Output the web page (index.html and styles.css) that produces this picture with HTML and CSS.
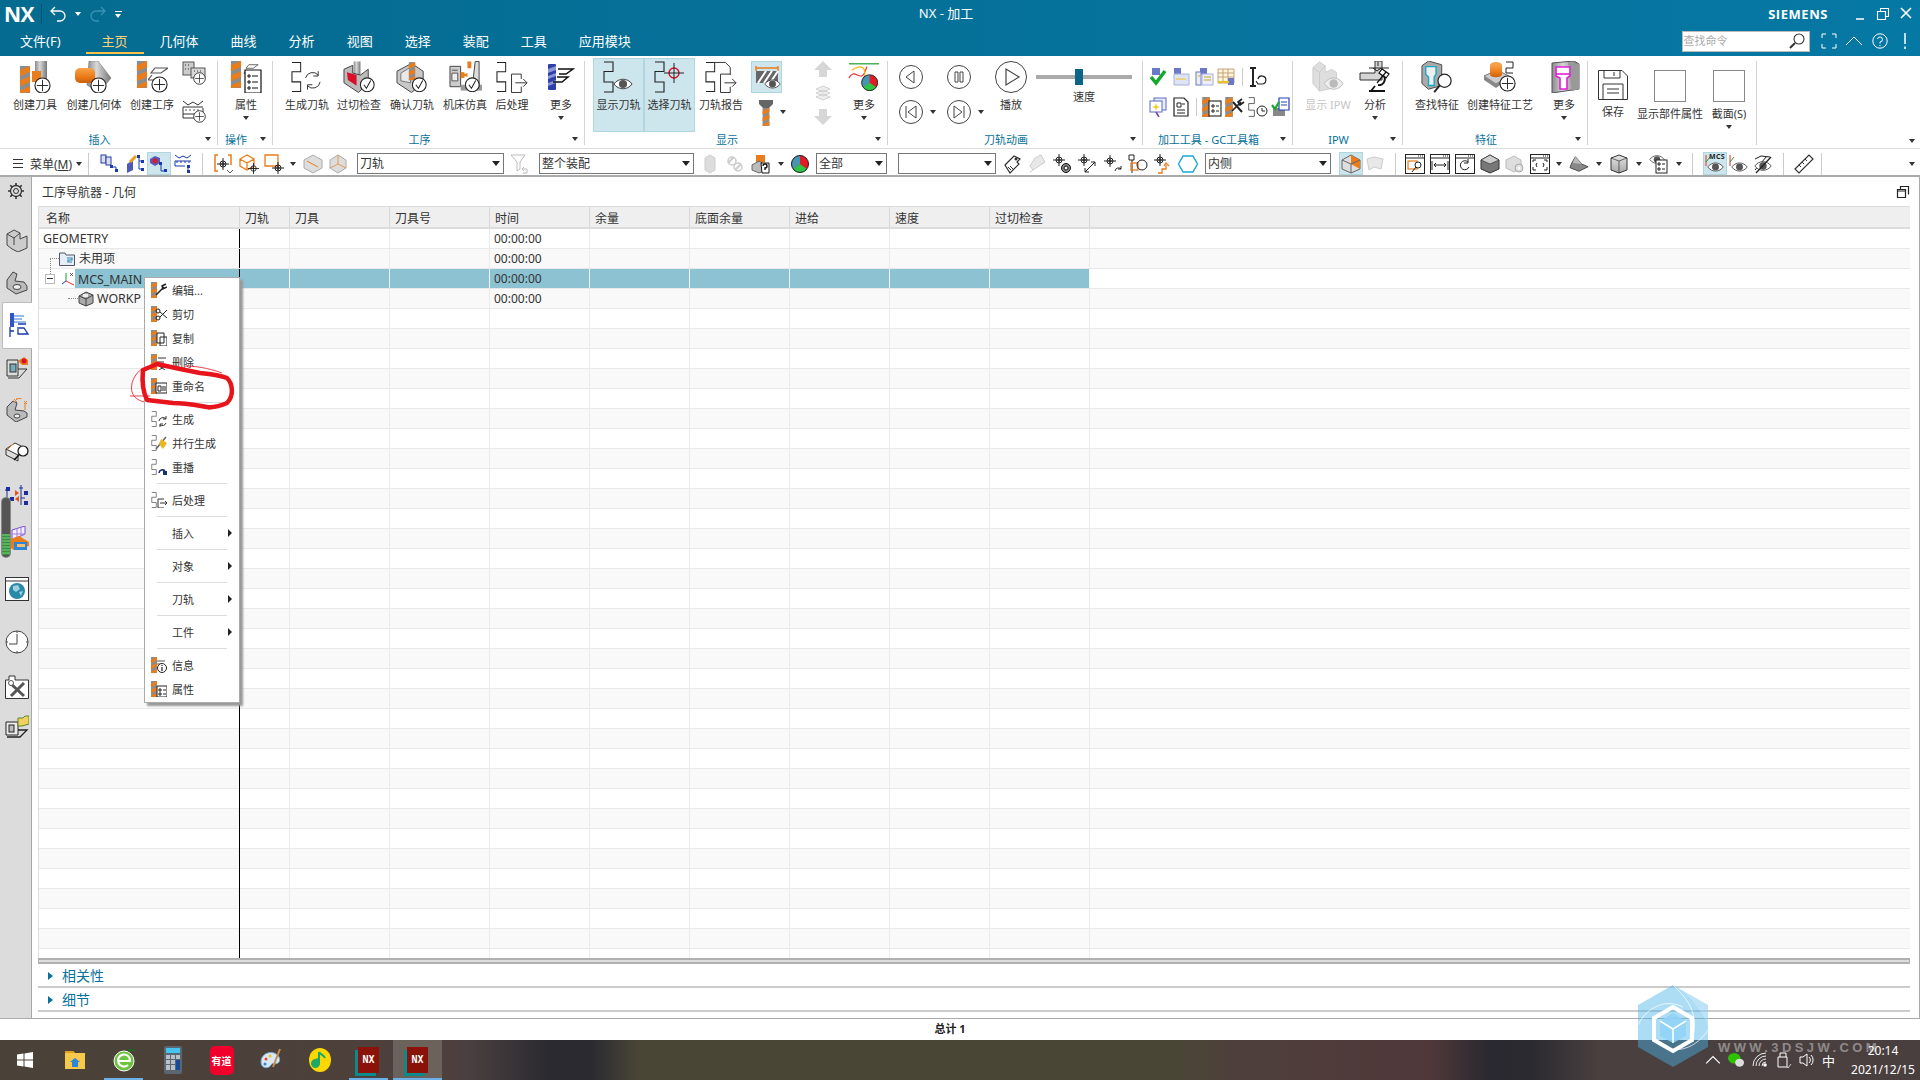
FILE: index.html
```html
<!DOCTYPE html>
<html lang="zh-CN">
<head>
<meta charset="utf-8">
<title>NX - 加工</title>
<link rel="stylesheet" href="styles.css">
</head>
<body>
<svg class="defs" xmlns="http://www.w3.org/2000/svg">
<defs>
<linearGradient id="gOr" x1="0" y1="0" x2="0" y2="1"><stop offset="0" stop-color="#f8a24a"/><stop offset=".6" stop-color="#ea7a16"/><stop offset="1" stop-color="#c85f0c"/></linearGradient>
<linearGradient id="gGr" x1="0" y1="0" x2="1" y2="0"><stop offset="0" stop-color="#8a8a8a"/><stop offset=".4" stop-color="#d8d8d8"/><stop offset="1" stop-color="#777"/></linearGradient>
<linearGradient id="gLg" x1="0" y1="0" x2="0" y2="1"><stop offset="0" stop-color="#e6e6e6"/><stop offset="1" stop-color="#a8a8a8"/></linearGradient>
</defs>
<symbol id="bit" viewBox="0 0 12 32"><rect width="12" height="32" fill="#8c8c8c"/><path d="M0 5L12 0V7L0 12ZM0 17L12 12V19L0 24ZM0 29L12 24V31L0 32Z" fill="#e97c1b"/></symbol>
<symbol id="plus" viewBox="0 0 18 18"><circle cx="9" cy="9" r="8" fill="#fff" stroke="#222" stroke-width="1.2"/><path d="M9 3V15M3 9H15" stroke="#222" fill="none"/></symbol>
<symbol id="chk" viewBox="0 0 18 18"><circle cx="9" cy="9" r="8" fill="#fff" stroke="#222" stroke-width="1.2"/><path d="M5 9L8 13L13 4" stroke="#222" fill="none" stroke-width="1.2"/></symbol>
<symbol id="snake" viewBox="0 0 11 32"><path d="M1 1H10V10.500H1V21H10V31H1" fill="none" stroke="#222" stroke-width="1.100"/></symbol>
<symbol id="eye" viewBox="0 0 22 14"><path d="M1 7C6 0 16 0 21 7C16 14 6 14 1 7Z" fill="#fff" stroke="#333"/><circle cx="11" cy="7" r="4.500" fill="#555"/></symbol>
<symbol id="slant" viewBox="0 0 20 14"><path d="M7 1H20L13 6H3ZM4 8L0 13H12" fill="none" stroke="#555" stroke-width="1.200"/></symbol>

<symbol id="b-ctool" viewBox="0 0 33 32"><use href="#bit" x="0" y="5" width="12" height="27"/><rect x="16" y="0" width="12" height="18" fill="url(#gGr)"/><rect x="13" y="10" width="9" height="11" fill="#e97c1b"/><use href="#plus" x="15" y="16" width="17" height="17"/></symbol>
<symbol id="b-cgeom" viewBox="0 0 38 32"><path d="M14 0H23L36 17L24 32L12 24Z" fill="url(#gGr)" stroke="#666" stroke-width=".5"/><rect x="0" y="7" width="20" height="15" rx="5" fill="url(#gOr)"/><use href="#plus" x="15" y="16" width="17" height="17"/></symbol>
<symbol id="b-cop" viewBox="0 0 33 32"><use href="#bit" x="0" y="0" width="12" height="27"/><use href="#slant" x="12" y="6" width="20" height="14"/><use href="#plus" x="15" y="15" width="17" height="17"/></symbol>
<symbol id="s-c1" viewBox="0 0 24 24"><rect x="1" y="1" width="11" height="13" fill="#ccc" stroke="#555"/><rect x="9" y="7" width="14" height="10" fill="#d8d8d8" stroke="#555"/><path d="M3 4h1M6 4h1M3 8h1M6 8h1M12 10h1M15 10h1M18 10h1" stroke="#333"/><use href="#plus" x="11" y="11" width="13" height="13"/></symbol>
<symbol id="s-c2" viewBox="0 0 24 24"><path d="M1 2L6 6L11 3L16 6L21 2M1 8H21M1 15H21V9M1 8V19H12" fill="none" stroke="#333"/><path d="M3 11h2M7 11h2M11 11h2M15 11h2" stroke="#555"/><use href="#plus" x="11" y="11" width="13" height="13"/></symbol>
<symbol id="b-attr" viewBox="0 0 33 32"><use href="#bit" x="0" y="0" width="12" height="27"/><use href="#slant" x="11" y="3" width="20" height="10"/><path d="M15 9H31V32H15Z" fill="#fff" stroke="#111" stroke-width="1.200"/><path d="M18 14h2v2h-2zM18 20h2v2h-2zM18 26h2v2h-2z" fill="none" stroke="#111"/><path d="M22 15h6M22 21h6M22 27h6" stroke="#111"/></symbol>
<symbol id="b-gen" viewBox="0 0 34 32"><use href="#snake" x="0" y="0" width="11" height="32"/><path d="M15 17A7.500 7.500 0 0 1 28 14M30 21A7.500 7.500 0 0 1 17 25" fill="none" stroke="#333"/><path d="M28 10V15H23M17 29V24H22" fill="none" stroke="#333"/></symbol>
<symbol id="b-gouge" viewBox="0 0 34 32"><rect x="11" y="0" width="7" height="18" fill="url(#gGr)"/><path d="M1 8L10 4V12L18 14L26 8V22L16 32L1 22Z" fill="#bbb" stroke="#444"/><path d="M4 11L14 14V25L5 19Z" fill="#d8102a"/><use href="#chk" x="17" y="16" width="16" height="16"/></symbol>
<symbol id="b-conf" viewBox="0 0 34 32"><path d="M1 10L16 2L28 10V22L16 32L1 22Z" fill="#c8c8c8" stroke="#444"/><path d="M5 12L15 6V22L5 20Z" fill="#e9e9e9" stroke="#777"/><use href="#bit" x="13" y="0" width="7" height="20"/><use href="#chk" x="16" y="16" width="16" height="16"/></symbol>
<symbol id="b-mach" viewBox="0 0 34 32"><path d="M1 5H12V26H1Z" fill="#ccc" stroke="#444"/><path d="M3 9h6M3 12h6v8H3z" fill="#eee" stroke="#555"/><rect x="12" y="24" width="22" height="6" fill="#999"/><path d="M27 0H31V26H24Z" fill="#ddd" stroke="#444"/><rect x="19" y="0" width="4" height="7" fill="#e97c1b"/><path d="M13 14L19 12V16Z" fill="#e97c1b"/><rect x="12" y="11" width="4" height="6" fill="#e97c1b"/><use href="#chk" x="16" y="16" width="16" height="16"/></symbol>
<symbol id="b-post" viewBox="0 0 34 32"><use href="#snake" x="0" y="0" width="11" height="32"/><path d="M26 13H16V32H26M20 22H32M28 18L32 22L28 26M26 13V18M26 26V32" fill="none" stroke="#333"/></symbol>
<symbol id="b-more1" viewBox="0 0 32 32"><rect x="3" y="3" width="8" height="26" rx="1" fill="#2f3fa8"/><path d="M3 8L11 5V9L3 12ZM3 15L11 12V15L3 18ZM3 22L11 19V22L3 25Z" fill="#8a96d8"/><path d="M13 8H28L21 13H14M12 16H23L17 21H8" fill="none" stroke="#111" stroke-width="1.500"/></symbol>
<symbol id="b-show" viewBox="0 0 32 32"><use href="#snake" x="0" y="0" width="11" height="32"/><use href="#eye" x="10" y="16" width="20" height="14"/></symbol>
<symbol id="b-sel" viewBox="0 0 32 32"><use href="#snake" x="0" y="0" width="11" height="32"/><circle cx="20" cy="12" r="5" fill="none" stroke="#d8102a" stroke-width="1.400"/><path d="M20 2V22M10 12H30" stroke="#222"/></symbol>
<symbol id="b-rep" viewBox="0 0 34 32"><use href="#snake" x="0" y="0" width="11" height="32"/><path d="M8 1H21L26 6V14" fill="none" stroke="#333"/><path d="M26 13H16V32H26M20 22H32M28 18L32 22L28 26M26 26V32" fill="none" stroke="#333"/></symbol>
<symbol id="b-thick" viewBox="0 0 28 28"><path d="M3 3V8M25 3V8M3 5H25" stroke="#e97c1b" stroke-width="1.500" fill="none"/><rect x="3" y="8" width="22" height="12" fill="#666"/><path d="M5 20L13 8M11 20L19 8M17 20L25 8" stroke="#fff" stroke-width="2"/><use href="#eye" x="11" y="15" width="17" height="12"/></symbol>
<symbol id="s-tool" viewBox="0 0 14 26"><path d="M0 0H14V4L10 8H4L0 4Z" fill="#666"/><use href="#bit" x="3" y="8" width="8" height="18"/></symbol>
<symbol id="up" viewBox="0 0 18 16"><path d="M9 0L18 9H13V16H5V9H0Z" fill="#d6d6d6"/></symbol>
<symbol id="down" viewBox="0 0 18 16"><path d="M9 16L18 7H13V0H5V7H0Z" fill="#d6d6d6"/></symbol>
<symbol id="layers" viewBox="0 0 16 16"><path d="M1 4L8 1L15 4L8 7ZM1 8L8 5L15 8L8 11ZM1 12L8 9L15 12L8 15Z" fill="#eee" stroke="#c2c2c2" stroke-width=".7"/></symbol>
<symbol id="pie" viewBox="0 0 18 18"><circle cx="9" cy="9" r="8.500" fill="#e31b23"/><path d="M9 9V.5A8.500 8.500 0 0 0 2 14Z" fill="#4596b5"/><path d="M9 9L2 14A8.500 8.500 0 0 0 16 14Z" fill="#2cc544"/><circle cx="9" cy="9" r="8.500" fill="none" stroke="#222"/></symbol>
<symbol id="b-more2" viewBox="0 0 34 34"><path d="M1 3H33" stroke="#0a9a20" stroke-width="1.200"/><path d="M1 18C8 5 14 28 20 6" fill="none" stroke="#e82a30" stroke-width="1.200"/><path d="M4 10C12 3 24 5 14 24" fill="none" stroke="#f2b400" stroke-width="1.200"/><use href="#pie" x="14" y="14" width="18" height="18"/></symbol>
<symbol id="circ-l" viewBox="0 0 24 24"><circle cx="12" cy="12" r="11.500" fill="#fff" stroke="#444"/><path d="M15 6V18L7 12Z" fill="none" stroke="#444"/></symbol>
<symbol id="circ-p" viewBox="0 0 24 24"><circle cx="12" cy="12" r="11.500" fill="#fff" stroke="#444"/><path d="M8 7h3v10H8zM13 7h3v10h-3z" fill="none" stroke="#444"/></symbol>
<symbol id="circ-s" viewBox="0 0 24 24"><circle cx="12" cy="12" r="11.500" fill="#fff" stroke="#444"/><path d="M7 6V18M17 6V18L9 12Z" fill="none" stroke="#444"/></symbol>
<symbol id="circ-e" viewBox="0 0 24 24"><circle cx="12" cy="12" r="11.500" fill="#fff" stroke="#444"/><path d="M17 6V18M7 6V18L15 12Z" fill="none" stroke="#444"/></symbol>
<symbol id="circ-g" viewBox="0 0 32 32"><circle cx="16" cy="16" r="15.500" fill="#fff" stroke="#444"/><path d="M11 8V24L24 16Z" fill="none" stroke="#444" stroke-width="1.200"/></symbol>
<symbol id="g-a" viewBox="0 0 20 20"><rect x="4" y="1" width="8" height="7" fill="#6a78c8"/><path d="M3 10L8 16L17 4" fill="none" stroke="#12a82a" stroke-width="3.500"/></symbol>
<symbol id="g-b" viewBox="0 0 20 20"><rect x="3" y="1" width="7" height="7" fill="#6a78c8"/><path d="M3 7H18V18H3Z" fill="#dfe4f4" stroke="#a8b0d8"/><path d="M5 12h10" stroke="#f0c020"/></symbol>
<symbol id="g-c" viewBox="0 0 20 20"><rect x="6" y="1" width="7" height="7" fill="#6a78c8"/><rect x="2" y="5" width="5" height="13" fill="#eee" stroke="#6a78c8"/><rect x="8" y="7" width="11" height="11" fill="#eef" stroke="#a8b0d8"/><path d="M10 10h7M10 13h7M4 9h2" stroke="#c2a820"/></symbol>
<symbol id="g-d" viewBox="0 0 20 20"><path d="M1 2H17V16H1ZM1 6H17M1 10H17M6 2V16M11 2V16" fill="#fff7d8" stroke="#c2a080"/><rect x="11" y="11" width="6" height="7" fill="#6a78c8"/><path d="M1 15H12" stroke="#e8c020" stroke-width="2"/></symbol>
<symbol id="g-e" viewBox="0 0 20 20"><path d="M2 1H8M2 19H8M5 1V19" stroke="#222" stroke-width="2"/><path d="M10 12A4 4 0 1 1 14 17H10L8 14" fill="none" stroke="#222" stroke-width="1.200"/></symbol>
<symbol id="g-f" viewBox="0 0 20 20"><rect x="6" y="1" width="12" height="12" fill="#e8ecff" stroke="#5a6ac0"/><rect x="2" y="4" width="12" height="11" fill="#fff" stroke="#5a6ac0"/><path d="M8 6L9 9L12 10L9 11L8 14L7 11L4 10L7 9Z" fill="#f0d020"/><path d="M8 15L11 20" stroke="#7b3ac0" stroke-width="1.500"/></symbol>
<symbol id="g-g" viewBox="0 0 20 20"><path d="M3 1H13L17 5V19H3Z" fill="#fff" stroke="#222" stroke-width="1.200"/><path d="M6 6H10V10H6ZM6 13H14M6 16H14M11 7H14" fill="none" stroke="#222"/></symbol>
<symbol id="g-h" viewBox="0 0 20 20"><use href="#bit" x="0" y="0" width="8" height="20"/><rect x="7" y="4" width="12" height="15" fill="#fff" stroke="#222" stroke-width="1.100"/><path d="M10 8h2v2h-2zM10 13h2v2h-2zM14 9h3M14 14h3" fill="none" stroke="#222"/></symbol>
<symbol id="g-i" viewBox="0 0 20 20"><use href="#bit" x="0" y="0" width="8" height="20"/><path d="M7 14L16 5M17 2L13 5L15 8L19 5" fill="none" stroke="#222" stroke-width="1.600"/><path d="M8 5L17 15" stroke="#222" stroke-width="2"/></symbol>
<symbol id="g-j" viewBox="0 0 20 20"><use href="#snake" x="0" y="0" width="7" height="20"/><circle cx="14" cy="14" r="5" fill="#fff" stroke="#222"/><path d="M14 11V14H17" fill="none" stroke="#222"/></symbol>
<symbol id="g-k" viewBox="0 0 20 20"><rect x="2" y="11" width="12" height="8" fill="#888"/><path d="M8 1H18V13H8Z" fill="#fff" stroke="#2440b8" stroke-width="1.200"/><path d="M10 5h6M10 8h6" stroke="#2440b8"/><path d="M1 8L4 12L8 5" stroke="#1ca830" stroke-width="2.200" fill="none"/></symbol>
<symbol id="b-ipw" viewBox="0 0 34 34"><path d="M1 7L8 1L14 5V12L21 9L26 12V28L8 32L1 24Z" fill="#dedede" stroke="#ccc"/><path d="M8 32V12L1 7M8 12L14 5" fill="none" stroke="#c8c8c8"/><path d="M13 24C18 16 28 16 33 24C28 32 18 32 13 24Z" fill="#eee" stroke="#bbb"/><circle cx="23" cy="24" r="4.500" fill="#bbb"/></symbol>
<symbol id="b-ana" viewBox="0 0 32 32"><path d="M1 12H16V0H23V19H1Z" fill="#d5d5d5" stroke="#333"/><path d="M14 7L18 10L22 7M19 1V5M10 7H30M10 0" fill="none" stroke="#222"/><path d="M27 11L18 22M23 8L30 13L27 17L20 12Z" fill="#fff" stroke="#111" stroke-width="1.200"/><path d="M10 30H26M12 30L16 25M19 24A6 6 0 0 0 25 15" fill="none" stroke="#111" stroke-width="1.800"/></symbol>
<symbol id="b-find" viewBox="0 0 34 34"><path d="M1 5L8 0L22 4V26L8 30L1 24Z" fill="#aaa" stroke="#444"/><path d="M5 6H16V14L14 17V26H8V17L5 14Z" fill="#eee" stroke="#18a8c8" stroke-width="1.500"/><circle cx="25" cy="21" r="7" fill="#fff" stroke="#222" stroke-width="1.300"/><path d="M20 26L14 33" stroke="#222" stroke-width="2"/></symbol>
<symbol id="b-feat" viewBox="0 0 34 32"><path d="M1 15L14 9L26 15L13 23Z" fill="#ccc" stroke="#777"/><path d="M1 15V19L13 27V23ZM26 15V18L13 27V23Z" fill="#888"/><ellipse cx="13" cy="4" rx="6" ry="3" fill="#f4a24a"/><path d="M7 4V14C9 17 17 17 19 14V4Z" fill="url(#gOr)"/><path d="M23 1H30V7H23V12H30" fill="none" stroke="#222"/><use href="#plus" x="16" y="14" width="17" height="17"/></symbol>
<symbol id="b-moref" viewBox="0 0 32 32"><path d="M4 2L26 0L31 3V28L4 32Z" fill="url(#gGr)" stroke="#555"/><path d="M20 1L31 3V28L24 30Z" fill="#999"/><path d="M8 6H22V15L19 17V28H12V17L8 15Z" fill="#fff" stroke="#e020d8" stroke-width="1.600"/><path d="M8 13H22" stroke="#e020d8" stroke-width="1.600"/></symbol>
<symbol id="b-save" viewBox="0 0 30 30"><path d="M.5.500H24L29.500 6V29.500H.5Z" fill="#fff" stroke="#333"/><path d="M6 .5V8H22V.5M16 2V6M5 14H25V29M5 29V14M9 19H21M9 23H21" fill="none" stroke="#333"/></symbol>

<symbol id="t-a" viewBox="0 0 20 20"><rect x="1" y="1" width="5" height="8" fill="#dde" stroke="#2240a0"/><rect x="6" y="3" width="5" height="8" fill="#dde" stroke="#2240a0"/><path d="M12 13H16V17" fill="none" stroke="#1a3ab0"/><rect x="10" y="11" width="3" height="3" fill="#1a3ab0"/><rect x="15" y="15" width="3" height="3" fill="#1a3ab0"/></symbol>
<symbol id="t-b" viewBox="0 0 20 20"><path d="M2 10L8 6V16L2 19Z" fill="#5058b8"/><path d="M5 8L11 2" stroke="#e8a020" stroke-width="3"/><path d="M14 2V15M14 7H17M14 15H17" fill="none" stroke="#1a3ab0"/><rect x="12" y="1" width="3" height="3" fill="#1a3ab0"/><rect x="16" y="6" width="3" height="3" fill="#1a3ab0"/><rect x="16" y="14" width="3" height="3" fill="#1a3ab0"/></symbol>
<symbol id="t-c" viewBox="0 0 20 20"><path d="M1 5L6 2L11 4V9L6 12L1 9Z" fill="#5a58b8"/><circle cx="6" cy="7" r="2.500" fill="#d81b2a"/><path d="M12 9V17H16" fill="none" stroke="#1a3ab0"/><rect x="10" y="8" width="3" height="3" fill="#1a3ab0"/><rect x="15" y="15" width="3" height="3" fill="#1a3ab0"/></symbol>
<symbol id="t-d" viewBox="0 0 20 20"><path d="M1 1L5 4L9 2L13 4L17 1M1 7H17M1 12H11M1 7V12M3 7V9M7 7V9M11 7V9M15 7V9" fill="none" stroke="#1a3ab0"/><path d="M14 12V18" stroke="#1a3ab0"/><rect x="13" y="11" width="3" height="3" fill="#1a3ab0"/><rect x="13" y="16" width="3" height="3" fill="#1a3ab0"/></symbol>
<symbol id="cross" viewBox="0 0 12 12"><circle cx="6" cy="6" r="3" fill="none" stroke="#222"/><path d="M6 0V12M0 6H12M4 6H8M6 4V8" stroke="#222"/></symbol>
<symbol id="t-e" viewBox="0 0 20 20"><path d="M4 1H1V17H4M14 1H17V11" fill="none" stroke="#e97c1b" stroke-width="1.500"/><use href="#cross" x="3" y="4" width="12" height="12"/><path d="M13 16L16 19L19 16" fill="none" stroke="#555"/></symbol>
<symbol id="t-f" viewBox="0 0 20 20"><path d="M1 5L8 1L15 5V12L8 16L1 12ZM1 5L8 9L15 5M8 9V16" fill="none" stroke="#e97c1b" stroke-width="1.300"/><use href="#cross" x="9" y="9" width="11" height="11"/></symbol>
<symbol id="t-g" viewBox="0 0 20 20"><path d="M1 1H14V12H1Z" fill="none" stroke="#e97c1b" stroke-width="1.300"/><use href="#cross" x="8" y="8" width="12" height="12"/></symbol>
<symbol id="t-h" viewBox="0 0 20 20"><path d="M1 6L10 1L19 6V14L10 19L1 14Z" fill="#ddd" stroke="#aaa"/><path d="M4 7L15 13" stroke="#e97c1b"/></symbol>
<symbol id="t-i" viewBox="0 0 20 20"><path d="M2 6L10 1L18 6V14L10 19L2 14Z" fill="#ddd" stroke="#aaa"/><path d="M10 1V10L18 14M10 10L2 14" fill="none" stroke="#e97c1b" stroke-opacity=".7"/></symbol>
<symbol id="t-j" viewBox="0 0 20 20"><path d="M1 1H15L10 8V15L7 17V8Z" fill="#fff" stroke="#bbb"/><path d="M12 15H17V19H13M14 13L12 15L14 17" fill="none" stroke="#bbb"/></symbol>
<symbol id="t-k" viewBox="0 0 20 20"><path d="M5 4L10 1L15 4V16L10 19L5 16Z" fill="#ddd" stroke="#ccc"/></symbol>
<symbol id="t-l" viewBox="0 0 20 20"><path d="M3 9L9 3M10 16L16 10" stroke="#ccc" stroke-width="2"/><circle cx="7" cy="7" r="4" fill="none" stroke="#ccc" stroke-width="1.500"/><circle cx="13" cy="13" r="4" fill="none" stroke="#ccc" stroke-width="1.500"/></symbol>
<symbol id="t-m" viewBox="0 0 20 20"><rect x="5" y="1" width="9" height="7" fill="#e97c1b"/><path d="M1 11L8 7L15 11V16L8 19L1 16Z" fill="#bbb" stroke="#666"/><path d="M10 9H18V19H11Z" fill="#fff" stroke="#111"/><path d="M12 12A2 2 0 1 1 14 14V16" fill="none" stroke="#111" stroke-width="1.400"/></symbol>
<symbol id="t-n" viewBox="0 0 20 20"><path d="M3 11L12 2L18 5L15 8L17 10L8 19Z" fill="#fff" stroke="#333" stroke-width="1.200"/><circle cx="14" cy="5" r="1.500" fill="#333"/><path d="M8 12L11 15M6 13L9 16" stroke="#333"/></symbol>
<symbol id="t-o" viewBox="0 0 20 20"><path d="M8 4L14 1L18 8L6 16L3 12Z" fill="#e8e8e8" stroke="#ccc"/><path d="M6 16L3 18" stroke="#ccc"/></symbol>
<symbol id="t-p" viewBox="0 0 20 20"><use href="#cross" x="1" y="0" width="12" height="12"/><circle cx="14" cy="14" r="4.500" fill="#888" stroke="#111"/><circle cx="14" cy="14" r="2" fill="#fff" stroke="#111"/></symbol>
<symbol id="t-q" viewBox="0 0 20 20"><use href="#cross" x="1" y="0" width="12" height="12"/><path d="M8 18L18 8M8 14V18H12M14 8H18V12" fill="none" stroke="#222"/></symbol>
<symbol id="t-r" viewBox="0 0 20 20"><use href="#cross" x="1" y="1" width="12" height="12"/><path d="M12 17A3.500 3.500 0 0 1 18 15M18 12V15H15" fill="none" stroke="#222"/></symbol>
<symbol id="t-s" viewBox="0 0 20 20"><path d="M1 1H6V6H1ZM4 6V19" fill="#fff" stroke="#222"/><rect x="3" y="9" width="7" height="7" fill="none" stroke="#e97c1b" stroke-width="1.300"/><circle cx="14" cy="11" r="5" fill="none" stroke="#222"/></symbol>
<symbol id="t-t" viewBox="0 0 20 20"><use href="#cross" x="1" y="0" width="12" height="12"/><path d="M5 19H9V15H13V11M11 12L13 9L16 12" fill="none" stroke="#e97c1b" stroke-width="1.300"/></symbol>
<symbol id="t-hex" viewBox="0 0 20 20"><path d="M5 2H15L19.500 10L15 18H5L.5 10Z" fill="none" stroke="#18a8d8" stroke-width="1.400"/></symbol>
<symbol id="t-u" viewBox="0 0 20 20"><path d="M1 6L10 1L19 6V15L10 19L1 15Z" fill="#ddd" stroke="#666"/><path d="M10 1L19 6V15L10 10Z" fill="#e97c1b"/><path d="M1 6L10 10L19 6M10 10V19" fill="none" stroke="#666"/></symbol>
<symbol id="t-v" viewBox="0 0 20 20"><path d="M2 5L9 3L18 5L16 15L9 13L4 16Z" fill="#e8e8e8" stroke="#ccc"/></symbol>
<symbol id="win" viewBox="0 0 20 20"><rect x=".5" y=".5" width="19" height="19" fill="#fff" stroke="#222"/><path d="M.5 4H19.500M13 2h1M15 2h1M17 2h1" stroke="#222"/></symbol>
<symbol id="t-w" viewBox="0 0 20 20"><use href="#win" width="20" height="20"/><rect x="3" y="7" width="9" height="8" fill="none" stroke="#e97c1b" stroke-width="1.200"/><circle cx="13" cy="11" r="3" fill="#fff" stroke="#222"/><path d="M11 13L7 18" stroke="#222"/></symbol>
<symbol id="t-x" viewBox="0 0 20 20"><use href="#win" width="20" height="20"/><path d="M4 11H16M6 9L4 11L6 13M14 9L16 11L14 13M2 7V16M18 7V16" fill="none" stroke="#222"/></symbol>
<symbol id="t-y" viewBox="0 0 20 20"><use href="#win" width="20" height="20"/><path d="M13 8A4.500 4.500 0 1 0 14 13M13 5V9H9" fill="none" stroke="#222"/></symbol>
<symbol id="t-z" viewBox="0 0 20 20"><path d="M1 6L10 1L19 6V15L10 19L1 15Z" fill="#777" stroke="#333"/><path d="M1 6L10 10L19 6L10 1Z" fill="#ccc" stroke="#333" stroke-width=".7"/></symbol>
<symbol id="t-aa" viewBox="0 0 20 20"><path d="M1 6L9 2L16 6V14L9 18L1 14Z" fill="#ddd" stroke="#bbb"/><circle cx="14" cy="14" r="4" fill="#ddd" stroke="#aaa"/><circle cx="14" cy="14" r="1.500" fill="#fff"/></symbol>
<symbol id="t-ab" viewBox="0 0 20 20"><use href="#win" width="20" height="20"/><path d="M3 8V6H6M14 6H17V8M3 13V16H6M14 16H17V13M7 9L6 11L7 13M13 9L14 11L13 13" fill="none" stroke="#222"/></symbol>
<symbol id="t-ac" viewBox="0 0 22 20"><path d="M7 2L14 10L21 13L11 18L1 14L3 9Z" fill="#888" stroke="#444"/><path d="M7 2L4 9L14 10Z" fill="#bbb"/></symbol>
<symbol id="t-ad" viewBox="0 0 20 20"><path d="M2 4L10 1L18 4V16L10 19L2 16Z" fill="url(#gLg)" stroke="#333"/><path d="M2 4L10 7L18 4M10 7V19" fill="none" stroke="#333" stroke-width=".7"/></symbol>
<symbol id="t-ae" viewBox="0 0 20 20"><use href="#eye" x="0" y="0" width="16" height="11"/><rect x="7" y="6" width="11" height="13" fill="#fff" stroke="#222"/><path d="M9 9h2v2H9zM9 14h2v2H9zM13 10h3M13 15h3" fill="none" stroke="#222"/></symbol>
<symbol id="t-af" viewBox="0 0 20 20"><path d="M1 12V1" stroke="#e82a30"/><path d="M1 8L5 3" stroke="#18a030"/><use href="#eye" x="2" y="7" width="17" height="12"/></symbol>
<symbol id="t-ag" viewBox="0 0 20 20"><path d="M2 16L14 2" stroke="#222"/><path d="M2 5L8 2L17 3" fill="none" stroke="#222"/><use href="#eye" x="1" y="6" width="18" height="12"/><path d="M3 19L18 3" stroke="#222" stroke-width="1.300"/></symbol>
<symbol id="t-ah" viewBox="0 0 20 20"><path d="M1 15L15 1L19 5L5 19Z" fill="#fff" stroke="#333" stroke-width="1.200"/><path d="M5 11L7 13M8 8L10 10M11 5L13 7" stroke="#333"/></symbol>

<symbol id="n-a" viewBox="0 0 24 24"><path d="M2 6L9 2L15 5V11L22 8V20L13 24L7 21L2 17Z" fill="#ccc" stroke="#444"/><path d="M2 6L9 10L15 5M9 10V17" fill="none" stroke="#444"/></symbol>
<symbol id="n-b" viewBox="0 0 24 24"><path d="M2 17V9L8 1L12 3L10 10L19 11L22 15V19L11 23Z" fill="#bbb" stroke="#444"/><ellipse cx="12" cy="16" rx="4" ry="2.500" fill="#eee" stroke="#444"/></symbol>
<symbol id="n-c" viewBox="0 0 24 24"><rect x="4" y="0" width="4" height="14" fill="#2f55c8"/><path d="M8 3H18M8 6H16M8 9H20" stroke="#2f78d8"/><path d="M4 14V24M4 18H8" stroke="#1a35b0" stroke-width="1.300"/><path d="M12 11H20M12 14V21H22L18 15H13" fill="none" stroke="#1a35b0" stroke-width="1.300"/></symbol>
<symbol id="n-d" viewBox="0 0 24 24"><path d="M2 4H13V20H2Z" fill="#ddd" stroke="#333"/><rect x="5" y="8" width="6" height="8" fill="#7ab" stroke="#333"/><path d="M13 13H22L14 22H3" fill="none" stroke="#333"/><path d="M13 5L19 1L23 4V9H17Z" fill="#e97c1b"/><circle cx="19" cy="5" r="2.500" fill="#d8102a"/></symbol>
<symbol id="n-e" viewBox="0 0 24 24"><path d="M2 17V9L8 3L12 5L10 12L19 13L22 15V19L11 24Z" fill="#bbb" stroke="#444"/><ellipse cx="12" cy="18" rx="3" ry="2" fill="#eee" stroke="#444"/><path d="M11 1L17 0M20 5V12M9 1L12 4M12 1L9 4M19 3L22 6M22 3L19 6" stroke="#e97c1b" fill="none"/></symbol>
<symbol id="n-f" viewBox="0 0 24 24"><path d="M1 8L10 2L22 8L13 14Z" fill="#fff" stroke="#333"/><path d="M1 8V14L13 20V14M22 8V14" fill="none" stroke="#333"/><path d="M3 8L8 3" stroke="#e97c1b"/><circle cx="18" cy="10" r="5" fill="#fff" stroke="#111" stroke-width="1.200"/><path d="M14 14L9 19" stroke="#111" stroke-width="1.600"/></symbol>
<symbol id="n-g" viewBox="0 0 24 24"><path d="M2 4V11M0 7H4M2 11V22M2 16H6M16 2V10M14 5H18M16 10V22M16 15H20" stroke="#1a2f9a" fill="none"/><rect x="1" y="4" width="4" height="4" fill="#1a2f9a"/><rect x="5" y="14" width="4" height="4" fill="#1a2f9a"/><rect x="19" y="8" width="4" height="4" fill="#1a2f9a"/><rect x="19" y="18" width="4" height="4" fill="#1a2f9a"/><path d="M10 7L14 10L10 13Z" fill="#e8501a"/><path d="M14 13L10 16L14 19Z" fill="#e8501a"/></symbol>
<symbol id="n-h" viewBox="0 0 24 24"><path d="M7 4L20 0V8L7 14Z" fill="#f0f0ff" stroke="#7a4ad0"/><path d="M7 8H20M12 2V11M16 1V10M7 14L20 8" stroke="#a07ad8" fill="none"/><path d="M2 14L14 10L24 16V20L9 24L2 20Z" fill="#e97c1b"/><path d="M9 16H22V24H9Z" fill="#2b86d8"/><rect x="12" y="18" width="8" height="3" fill="#f6c070"/></symbol>
<symbol id="n-i" viewBox="0 0 24 24"><rect x=".5" y=".5" width="23" height="23" fill="#fff" stroke="#333"/><path d="M.5 4H23.500" stroke="#333"/><circle cx="12" cy="14" r="8" fill="#2a88a8"/><path d="M8 9L13 8L15 12L11 15L8 13ZM14 15L18 14L16 19Z" fill="#9bd0dc"/></symbol>
<symbol id="n-j" viewBox="0 0 24 24"><circle cx="12" cy="12" r="11" fill="#fff" stroke="#444"/><path d="M12 4V14H4M12 1V3M12 21V23M1 12H3M21 12H23" fill="none" stroke="#444"/></symbol>
<symbol id="n-k" viewBox="0 0 24 24"><path d="M.5 5H4V1H10V5H23.500V23.500H.5Z" fill="#fff" stroke="#333"/><path d="M5 8L19 21M19 8L6 21" stroke="#555" stroke-width="3"/><circle cx="6" cy="8" r="2.500" fill="#fff" stroke="#555"/></symbol>
<symbol id="n-l" viewBox="0 0 24 24"><path d="M1 7H13V20H1Z" fill="#eee" stroke="#222"/><rect x="4" y="10" width="5" height="7" fill="#bbb" stroke="#222"/><path d="M13 15H22L15 22H2" fill="none" stroke="#222" stroke-width="1.300"/><path d="M13 3H18L20 1H24V9L17 11H13Z" fill="#f2d060" stroke="#5a8a20"/></symbol>

<symbol id="m-edit" viewBox="0 0 16 16"><use href="#bit" width="6" height="16"/><path d="M5 13L13 5M15 2L11 4L12 7L16 5" fill="none" stroke="#222" stroke-width="1.500"/></symbol>
<symbol id="m-cut" viewBox="0 0 16 16"><use href="#bit" width="6" height="16"/><circle cx="7" cy="12" r="2" fill="none" stroke="#222"/><circle cx="7" cy="5" r="2" fill="none" stroke="#222"/><path d="M9 6L16 12M9 11L16 4" stroke="#222"/></symbol>
<symbol id="m-copy" viewBox="0 0 16 16"><use href="#bit" width="6" height="16"/><path d="M6 3H13V13H6ZM9 7H16V16H9Z" fill="#fff" stroke="#222"/></symbol>
<symbol id="m-del" viewBox="0 0 16 16"><use href="#bit" width="6" height="16"/><path d="M7 4H15M6 8H13M8 12L14 16M14 12L8 16" stroke="#333"/></symbol>
<symbol id="m-ren" viewBox="0 0 16 16"><use href="#bit" width="6" height="16"/><path d="M5 5H16V15H5Z" fill="#fff" stroke="#222"/><path d="M7 8H10V13H7ZM12 8V13M14 8V13" fill="none" stroke="#222"/></symbol>
<symbol id="m-gen" viewBox="0 0 16 16"><use href="#snake" width="6" height="16"/><path d="M8 10A4 4 0 0 1 15 8M15 12A4 4 0 0 1 9 14M15 5V8H12M9 16V13H12" fill="none" stroke="#333"/></symbol>
<symbol id="m-par" viewBox="0 0 16 16"><use href="#snake" width="6" height="16"/><path d="M5 14L15 2" stroke="#666" stroke-width="1.500"/><path d="M10 4L16 8L12 14L8 9Z" fill="#e8b820"/></symbol>
<symbol id="m-rep" viewBox="0 0 16 16"><use href="#snake" width="6" height="16"/><path d="M8 14A3.500 3.500 0 0 1 14 12" fill="none" stroke="#1a2f78" stroke-width="1.600"/><rect x="12" y="12" width="4" height="4" fill="#1a2f78"/></symbol>
<symbol id="m-post" viewBox="0 0 16 16"><use href="#snake" width="6" height="16"/><path d="M13 7H7V16H13M9 11H16M14 9L16 11L14 13" fill="none" stroke="#333"/></symbol>
<symbol id="m-info" viewBox="0 0 16 16"><use href="#bit" width="6" height="16"/><path d="M6 4H14M6 7H11" stroke="#555"/><circle cx="11" cy="11" r="4.500" fill="#fff" stroke="#222"/><path d="M11 10V14M11 8V9" stroke="#222" stroke-width="1.200"/></symbol>
<symbol id="m-attr" viewBox="0 0 16 16"><use href="#bit" width="6" height="16"/><path d="M6 5H16V16H6Z" fill="#fff" stroke="#222"/><path d="M8 8h2v2H8zM8 12h2v2H8zM12 9h3M12 13h3" fill="none" stroke="#222"/></symbol>
</svg>

<div class="app">
  <header class="titlebar">
    <div class="title-row">
      <div class="qat">
        <span class="nx-logo">NX</span>
        <span class="qat-div"></span>
        <svg class="qat-ic" viewBox="0 0 18 16"><path d="M5 1L1 5L5 9M1 5H10A5 5 0 0 1 10 15H7" fill="none" stroke="#fff" stroke-width="1.300"/></svg>
        <span class="caret white"></span>
        <svg class="qat-ic redo" viewBox="0 0 18 16"><path d="M13 1L17 5L13 9M17 5H8A5 5 0 0 0 8 15H11" fill="none" stroke="#3b92b4" stroke-width="1.300"/></svg>
        <span class="qat-menu"></span>
      </div>
      <div class="app-title">NX - 加工</div>
      <div class="win-ctrl">
        <span class="siemens">SIEMENS</span>
        <svg class="w-min" viewBox="0 0 10 10"><path d="M1 9H9" stroke="#fff" stroke-width="1.500"/></svg>
        <svg class="w-res" viewBox="0 0 12 12"><path d="M.5 3.500H8.500V11.500H.5ZM3.500 3.500V.5H11.500V8.500H8.500" fill="none" stroke="#fff" stroke-width="1.100"/></svg>
        <svg class="w-close" viewBox="0 0 12 12"><path d="M1 1L11 11M11 1L1 11" stroke="#fff" stroke-width="1.600"/></svg>
      </div>
    </div>
    <div class="tab-row">
      <nav class="tabs">
        <span class="tab tab-file">文件(F)</span>
        <span class="tab tab-on">主页</span>
        <span class="tab">几何体</span>
        <span class="tab">曲线</span>
        <span class="tab">分析</span>
        <span class="tab">视图</span>
        <span class="tab">选择</span>
        <span class="tab">装配</span>
        <span class="tab">工具</span>
        <span class="tab">应用模块</span>
      </nav>
      <div class="search">
        <span class="search-box">查找命令<svg class="search-ic" viewBox="0 0 16 16"><circle cx="10" cy="6" r="5" fill="none" stroke="#333" stroke-width="1.100"/><path d="M6 10L1 15" stroke="#333" stroke-width="2"/></svg></span>
        <svg class="top-ic" viewBox="0 0 16 16"><path d="M1 5V1H5M11 1H15V5M1 11V15H5M11 15H15V11" fill="none" stroke="#fff"/></svg>
        <svg class="top-ic" viewBox="0 0 16 16"><path d="M0 12L8 4L16 12" fill="none" stroke="#fff"/></svg>
        <svg class="top-ic" viewBox="0 0 16 16"><circle cx="8" cy="8" r="7.200" fill="none" stroke="#fff"/><path d="M5.500 6A2.500 2.500 0 1 1 8 9V10.500M8 12V13.200" fill="none" stroke="#fff"/></svg>
        <svg class="top-ic" viewBox="0 0 16 16"><path d="M8 0V11M8 13.500V16" stroke="#fff" stroke-width="1.500"/></svg>
      </div>
    </div>
  </header>

  <section class="ribbon">
    <div class="group g-insert">
      <div class="g-body">
        <div class="rb w58"><svg class="i33"><use href="#b-ctool"/></svg><span class="lb">创建刀具</span></div>
        <div class="rb w60"><svg class="i38"><use href="#b-cgeom"/></svg><span class="lb">创建几何体</span></div>
        <div class="rb w56"><svg class="i33"><use href="#b-cop"/></svg><span class="lb">创建工序</span></div>
        <div class="smcol"><svg class="i24"><use href="#s-c1"/></svg><svg class="i24"><use href="#s-c2"/></svg></div>
      </div>
      <div class="g-foot">插入<span class="caret foot-caret"></span></div>
    </div>
    <div class="group g-op">
      <div class="g-body pad-op">
        <div class="rb w44"><svg class="i33"><use href="#b-attr"/></svg><span class="lb">属性</span><span class="caret"></span></div>
      </div>
      <div class="g-foot">操作<span class="caret foot-caret"></span></div>
    </div>
    <div class="group g-proc">
      <div class="g-body pad-proc">
        <div class="rb w52"><svg class="i33"><use href="#b-gen"/></svg><span class="lb">生成刀轨</span></div>
        <div class="rb w52"><svg class="i33"><use href="#b-gouge"/></svg><span class="lb">过切检查</span></div>
        <div class="rb w54"><svg class="i33"><use href="#b-conf"/></svg><span class="lb">确认刀轨</span></div>
        <div class="rb w52"><svg class="i33"><use href="#b-mach"/></svg><span class="lb">机床仿真</span></div>
        <div class="rb w42"><svg class="i33"><use href="#b-post"/></svg><span class="lb">后处理</span></div>
        <div class="rb w56"><svg class="i32"><use href="#b-more1"/></svg><span class="lb">更多</span><span class="caret"></span></div>
      </div>
      <div class="g-foot">工序<span class="caret foot-caret"></span></div>
    </div>
    <div class="group g-show">
      <div class="g-body pad-show">
        <div class="rb w51 rb-on"><svg class="i32"><use href="#b-show"/></svg><span class="lb">显示刀轨</span></div>
        <div class="rb w51 rb-on"><svg class="i32"><use href="#b-sel"/></svg><span class="lb">选择刀轨</span></div>
        <div class="rb w52"><svg class="i33"><use href="#b-rep"/></svg><span class="lb">刀轨报告</span></div>
        <div class="col-thick">
          <span class="thick-btn"><svg class="i26"><use href="#b-thick"/></svg></span>
          <span class="tool-row"><svg class="i-tool"><use href="#s-tool"/></svg><span class="caret"></span></span>
        </div>
        <div class="col-arrows"><svg class="i-arrow"><use href="#up"/></svg><svg class="i-lay"><use href="#layers"/></svg><svg class="i-arrow"><use href="#down"/></svg></div>
        <div class="rb w46"><svg class="i34"><use href="#b-more2"/></svg><span class="lb">更多</span><span class="caret"></span></div>
      </div>
      <div class="g-foot">显示<span class="caret foot-caret"></span></div>
    </div>
    <div class="group g-anim">
      <div class="g-body pad-anim">
        <div class="media">
          <span class="mbtn"><svg class="i24"><use href="#circ-l"/></svg></span>
          <span class="mbtn"><svg class="i24"><use href="#circ-p"/></svg></span>
          <span class="mbtn"><svg class="i24"><use href="#circ-s"/></svg><span class="caret"></span></span>
          <span class="mbtn"><svg class="i24"><use href="#circ-e"/></svg><span class="caret"></span></span>
        </div>
        <div class="rb w32"><svg class="i32"><use href="#circ-g"/></svg><span class="lb">播放</span></div>
        <div class="speed"><span class="track"><span class="thumb"></span></span><span class="lb">速度</span></div>
      </div>
      <div class="g-foot">刀轨动画<span class="caret foot-caret"></span></div>
    </div>
    <div class="group g-gc">
      <div class="g-body gc-body">
        <div class="gc-row">
          <svg class="i20"><use href="#g-a"/></svg><svg class="i20"><use href="#g-b"/></svg><svg class="i20"><use href="#g-c"/></svg><svg class="i20"><use href="#g-d"/></svg><span class="v-sep"></span><svg class="i20"><use href="#g-e"/></svg>
        </div>
        <div class="gc-row">
          <svg class="i20"><use href="#g-f"/></svg><svg class="i20"><use href="#g-g"/></svg><span class="v-sep"></span><svg class="i20"><use href="#g-h"/></svg><svg class="i20"><use href="#g-i"/></svg><svg class="i20"><use href="#g-j"/></svg><svg class="i20"><use href="#g-k"/></svg>
        </div>
      </div>
      <div class="g-foot">加工工具 - GC工具箱<span class="caret foot-caret"></span></div>
    </div>
    <div class="group g-ipw">
      <div class="g-body pad-ipw">
        <div class="rb w66"><svg class="i34"><use href="#b-ipw"/></svg><span class="lb lb-dim">显示 IPW</span></div>
        <div class="rb w28"><svg class="i32"><use href="#b-ana"/></svg><span class="lb">分析</span><span class="caret"></span></div>
      </div>
      <div class="g-foot">IPW<span class="caret foot-caret"></span></div>
    </div>
    <div class="group g-feat">
      <div class="g-body pad-feat">
        <div class="rb w60"><svg class="i34"><use href="#b-find"/></svg><span class="lb">查找特征</span></div>
        <div class="rb w66"><svg class="i34"><use href="#b-feat"/></svg><span class="lb">创建特征工艺</span></div>
        <div class="rb w48 ml7"><svg class="i32"><use href="#b-moref"/></svg><span class="lb">更多</span><span class="caret"></span></div>
      </div>
      <div class="g-foot">特征<span class="caret foot-caret"></span></div>
    </div>
    <div class="group g-last">
      <div class="g-body pad-last">
        <div class="rb w38 low"><svg class="i30"><use href="#b-save"/></svg><span class="lb">保存</span></div>
        <div class="rb w76 low"><span class="sq"></span><span class="lb">显示部件属性</span></div>
        <div class="rb w42 low"><span class="sq"></span><span class="lb">截面(S)</span><span class="caret"></span></div>
      </div>
    </div>
    <span class="caret ribbon-caret"></span>
  </section>

  <section class="toolbar">
    <div class="tg tg-menu">
      <span class="burger"></span><span class="menu-txt">菜单(<u>M</u>)</span><span class="caret"></span>
    </div>
    <div class="tg tg-nav">
      <span class="tb"><svg class="i20"><use href="#t-a"/></svg></span>
      <span class="tb"><svg class="i20"><use href="#t-b"/></svg></span>
      <span class="tb tb-on"><svg class="i20"><use href="#t-c"/></svg></span>
      <span class="tb"><svg class="i20"><use href="#t-d"/></svg></span>
    </div>
    <div class="tg tg-sel">
      <span class="tb"><svg class="i20"><use href="#t-e"/></svg></span>
      <span class="tb"><svg class="i20"><use href="#t-f"/></svg></span>
      <span class="tb"><svg class="i20"><use href="#t-g"/></svg></span>
      <span class="cb"><span class="caret"></span></span>
      <span class="tb"><svg class="i20"><use href="#t-h"/></svg></span>
      <span class="tb"><svg class="i20"><use href="#t-i"/></svg></span>
    </div>
    <span class="combo c-path">刀轨</span>
    <span class="tb m-funnel"><svg class="i20"><use href="#t-j"/></svg></span>
    <span class="combo c-asm">整个装配</span>
    <div class="tg tg-asm">
      <span class="tb"><svg class="i20"><use href="#t-k"/></svg></span>
      <span class="tb"><svg class="i20"><use href="#t-l"/></svg></span>
      <span class="tb"><svg class="i20"><use href="#t-m"/></svg></span>
      <span class="cb"><span class="caret"></span></span>
    </div>
    <span class="tb"><svg class="i18"><use href="#pie"/></svg></span>
    <span class="combo c-all">全部</span>
    <span class="combo c-empty"></span>
    <div class="tg tg-geo">
      <span class="tb"><svg class="i20"><use href="#t-n"/></svg></span>
      <span class="tb"><svg class="i20"><use href="#t-o"/></svg></span>
      <span class="tb"><svg class="i20"><use href="#t-p"/></svg></span>
      <span class="tb"><svg class="i20"><use href="#t-q"/></svg></span>
      <span class="tb"><svg class="i20"><use href="#t-r"/></svg></span>
      <span class="tb"><svg class="i20"><use href="#t-s"/></svg></span>
      <span class="tb"><svg class="i20"><use href="#t-t"/></svg></span>
      <span class="tb"><svg class="i20"><use href="#t-hex"/></svg></span>
    </div>
    <span class="combo c-in">内侧</span>
    <div class="tg tg-cut">
      <span class="tb tb-on"><svg class="i20"><use href="#t-u"/></svg></span>
      <span class="tb"><svg class="i20"><use href="#t-v"/></svg></span>
    </div>
    <div class="tg tg-view">
      <span class="tb"><svg class="i20"><use href="#t-w"/></svg></span>
      <span class="tb"><svg class="i20"><use href="#t-x"/></svg></span>
      <span class="tb"><svg class="i20"><use href="#t-y"/></svg></span>
      <span class="tb"><svg class="i20"><use href="#t-z"/></svg></span>
      <span class="tb"><svg class="i20"><use href="#t-aa"/></svg></span>
      <span class="tb"><svg class="i20"><use href="#t-ab"/></svg></span>
      <span class="cb"><span class="caret"></span></span>
      <span class="tb"><svg class="i20"><use href="#t-ac"/></svg></span>
      <span class="cb"><span class="caret"></span></span>
      <span class="tb"><svg class="i20"><use href="#t-ad"/></svg></span>
      <span class="cb"><span class="caret"></span></span>
      <span class="tb"><svg class="i20"><use href="#t-ae"/></svg></span>
      <span class="cb"><span class="caret"></span></span>
    </div>
    <div class="tg tg-mcs">
      <span class="tb tb-on"><span class="mcs-txt">MCS</span><svg class="i20"><use href="#t-af"/></svg></span>
      <span class="tb"><svg class="i20"><use href="#t-af"/></svg></span>
      <span class="tb"><svg class="i20"><use href="#t-ag"/></svg></span>
    </div>
    <div class="tg tg-rule">
      <span class="tb"><svg class="i20"><use href="#t-ah"/></svg></span>
    </div>
    <span class="caret tail-caret"></span>
  </section>

  <section class="workspace">
    <aside class="sidebar">
      <div class="gear"><svg class="i18" viewBox="0 0 18 18"><circle cx="9" cy="9" r="5.500" fill="none" stroke="#333" stroke-width="1.300"/><circle cx="9" cy="9" r="2.500" fill="none" stroke="#333"/><path d="M9 1V4M9 14V17M1 9H4M14 9H17M3.300 3.300L5.400 5.400M12.600 12.600L14.700 14.700M14.700 3.300L12.600 5.400M5.400 12.600L3.300 14.700" stroke="#333" stroke-width="1.600"/></svg></div>
      <div class="nav-list">
        <span class="nav"><svg class="i24"><use href="#n-a"/></svg></span>
        <span class="nav"><svg class="i24"><use href="#n-b"/></svg></span>
        <span class="nav nav-on"><svg class="i24"><use href="#n-c"/></svg></span>
        <span class="nav"><svg class="i24"><use href="#n-d"/></svg></span>
        <span class="nav"><svg class="i24"><use href="#n-e"/></svg></span>
        <span class="nav"><svg class="i24"><use href="#n-f"/></svg></span>
        <span class="nav"><svg class="i24"><use href="#n-g"/></svg></span>
        <span class="nav"><svg class="i24"><use href="#n-h"/></svg></span>
      </div>
      <span class="nav2 m9"><svg class="i24"><use href="#n-i"/></svg></span>
      <span class="nav2 m13"><svg class="i24"><use href="#n-j"/></svg></span>
      <span class="nav2 m5"><svg class="i24"><use href="#n-k"/></svg></span>
      <span class="nav2"><svg class="i24"><use href="#n-l"/></svg></span>
      <span class="side-scroll"></span>
    </aside>

    <main class="panel">
      <div class="panel-head">
        <span>工序导航器 - 几何</span>
        <svg class="restore" viewBox="0 0 12 12"><path d="M.5 3.500H8.500V11.500H.5ZM3.500 3.500V.5H11.500V8.500" fill="none" stroke="#222" stroke-width="1.200"/><path d="M.5 5H8.500" stroke="#222"/></svg>
      </div>
      <div class="grid">
        <div class="g-head">
          <span class="hc c-name">名称</span><span class="hc c-path-c">刀轨</span><span class="hc c-std">刀具</span><span class="hc c-std">刀具号</span><span class="hc c-std">时间</span><span class="hc c-std">余量</span><span class="hc c-std">底面余量</span><span class="hc c-std">进给</span><span class="hc c-std">速度</span><span class="hc c-std">过切检查</span><span class="hc c-rest"></span>
        </div>
        <div class="g-row">
          <span class="gc c-name"><span class="node n0">GEOMETRY</span></span><span class="gc c-path-c"></span><span class="gc c-std"></span><span class="gc c-std"></span><span class="gc c-std">00:00:00</span><span class="gc c-std"></span><span class="gc c-std"></span><span class="gc c-std"></span><span class="gc c-std"></span><span class="gc c-std"></span><span class="gc c-rest"></span>
        </div>
        <div class="g-row alt">
          <span class="gc c-name"><span class="dots d1"></span><span class="node n1"><svg class="i16" viewBox="0 0 16 14"><path d="M.5 3V1H6L7 3H15.500V13.500H.5Z" fill="#e4eef4" stroke="#556"/><path d="M8 6H13V8H9V10H13" fill="none" stroke="#2a8ab0" stroke-width="1.200"/></svg><span>未用项</span></span></span><span class="gc c-path-c"></span><span class="gc c-std"></span><span class="gc c-std"></span><span class="gc c-std">00:00:00</span><span class="gc c-std"></span><span class="gc c-std"></span><span class="gc c-std"></span><span class="gc c-std"></span><span class="gc c-std"></span><span class="gc c-rest"></span>
        </div>
        <div class="g-row">
          <span class="gc c-name"><span class="vdots"></span><span class="node n2"><span class="exp"></span><svg class="i14" viewBox="0 0 14 14"><path d="M5 9V1" stroke="#18a030"/><path d="M5 9L1 12" stroke="#1a40c8"/><path d="M5 9L13 13" stroke="#e82a30"/><path d="M9 1L12 4M12 1L9 4" stroke="#222" stroke-width=".7"/></svg><span class="sel-name">MCS_MAIN</span></span></span><span class="gc c-path-c sel"></span><span class="gc c-std sel"></span><span class="gc c-std sel"></span><span class="gc c-std sel">00:00:00</span><span class="gc c-std sel"></span><span class="gc c-std sel"></span><span class="gc c-std sel"></span><span class="gc c-std sel"></span><span class="gc c-std sel"></span><span class="gc c-rest"></span>
        </div>
        <div class="g-row alt">
          <span class="gc c-name"><span class="node n3"><span class="dots d2"></span><svg class="i16" viewBox="0 0 16 16"><path d="M1 5L8 1L15 4V12L8 15L1 12Z" fill="#aaa" stroke="#444"/><path d="M1 5L8 8L15 4M8 8V15" fill="none" stroke="#444"/><rect x="5" y="3" width="5" height="3" fill="#eee"/></svg><span>WORKP</span></span></span><span class="gc c-path-c"></span><span class="gc c-std"></span><span class="gc c-std"></span><span class="gc c-std">00:00:00</span><span class="gc c-std"></span><span class="gc c-std"></span><span class="gc c-std"></span><span class="gc c-std"></span><span class="gc c-std"></span><span class="gc c-rest"></span>
        </div>
        <div class="g-fill"><div class="g-fill-cols"></div></div>
      </div>
      <div class="hscroll"></div>
      <div class="sect"><span class="tri"></span>相关性</div>
      <div class="sect"><span class="tri"></span>细节</div>

      <div class="ctx">
        <div class="mi"><svg class="i16"><use href="#m-edit"/></svg><span>编辑...</span></div>
        <div class="mi"><svg class="i16"><use href="#m-cut"/></svg><span>剪切</span></div>
        <div class="mi"><svg class="i16"><use href="#m-copy"/></svg><span>复制</span></div>
        <div class="mi"><svg class="i16"><use href="#m-del"/></svg><span>删除</span></div>
        <div class="mi"><svg class="i16"><use href="#m-ren"/></svg><span>重命名</span></div>
        <div class="msep"></div>
        <div class="mi"><svg class="i16"><use href="#m-gen"/></svg><span>生成</span></div>
        <div class="mi"><svg class="i16"><use href="#m-par"/></svg><span>并行生成</span></div>
        <div class="mi"><svg class="i16"><use href="#m-rep"/></svg><span>重播</span></div>
        <div class="msep"></div>
        <div class="mi"><svg class="i16"><use href="#m-post"/></svg><span>后处理</span></div>
        <div class="msep"></div>
        <div class="mi sub"><span>插入</span></div>
        <div class="msep"></div>
        <div class="mi sub"><span>对象</span></div>
        <div class="msep"></div>
        <div class="mi sub"><span>刀轨</span></div>
        <div class="msep"></div>
        <div class="mi sub"><span>工件</span></div>
        <div class="msep"></div>
        <div class="mi"><svg class="i16"><use href="#m-info"/></svg><span>信息</span></div>
        <div class="mi"><svg class="i16"><use href="#m-attr"/></svg><span>属性</span></div>
      </div>
      <svg class="ink" viewBox="0 0 110 54"><path d="M13 8L27 2C45 6 60 9 70 11C80 12 90 13 97 16C103 22 104 34 97 41C90 44 84 46 77 45C65 43 55 41 43 41L17 38C13 30 12 18 13 8Z" fill="none" stroke="#e8141c" stroke-width="4.500" stroke-linejoin="round"/><path d="M13 6C4 12 0 22 2 30C4 36 8 38 14 40M0 34H20M55 4C70 4 84 8 92 11M78 47C86 47 94 44 100 38" fill="none" stroke="#e8141c" stroke-width=".8"/></svg>
    </main>
  </section>

  <footer class="status">总计 1</footer>

  <div class="taskbar">
    <span class="tk tk-start"><svg class="i16" viewBox="0 0 16 16"><path d="M0 2.500L6.500 1.600V7.500H0ZM7.500 1.400L16 0V7.500H7.500ZM0 8.500H6.500V14.400L0 13.500ZM7.500 8.500H16V16L7.500 14.600Z" fill="#fff"/></svg></span>
    <span class="tk"><svg class="i24" viewBox="0 0 24 24"><path d="M2 3H10L12 5H22V21H2Z" fill="#f6c84c"/><path d="M2 3H10L12 5H2Z" fill="#e0a020"/><path d="M9 14H15V19H9ZM7 14L12 10L17 14" fill="#2b86d8"/></svg></span>
    <span class="tk tk-run"><svg class="i24" viewBox="0 0 24 24"><circle cx="12" cy="13" r="10" fill="#6cc43c" stroke="#fff"/><path d="M6 13H18A6 6 0 1 0 16 17" fill="none" stroke="#fff" stroke-width="2.200"/><path d="M16 3C19 1 21 2 22 3" stroke="#1a6a20" stroke-width="2" fill="none"/></svg></span>
    <span class="tk"><svg class="i24 calc" viewBox="0 0 18 28"><rect width="18" height="28" rx="2" fill="#5a6670"/><rect x="2" y="2" width="14" height="5" fill="#46c4ee"/><path d="M2 9h4v4H2zM7 9h4v4H7zM12 9h4v4h-4zM2 14h4v4H2zM7 14h4v4H7zM2 19h4v5H2zM7 19h4v5H7z" fill="#b8c0c8"/><rect x="12" y="14" width="4" height="10" fill="#1a4a9a"/></svg></span>
    <span class="tk"><span class="youdao">有道</span></span>
    <span class="tk"><svg class="i24" viewBox="0 0 24 24"><path d="M2 14C2 7 9 3 15 5C21 7 22 13 19 15C16 17 14 14 12 17C10 21 2 21 2 14Z" fill="#d8e8f4" stroke="#7aa8c8"/><circle cx="7" cy="11" r="1.500" fill="#e8402a"/><circle cx="11" cy="8" r="1.500" fill="#f0c020"/><circle cx="6" cy="16" r="1.500" fill="#2a8ad8"/><path d="M21 1L14 19" stroke="#c88a4a" stroke-width="2"/></svg></span>
    <span class="tk"><svg class="i24" viewBox="0 0 24 24"><ellipse cx="12" cy="12" rx="11" ry="12" fill="#fcd800"/><path d="M11 4V15A3.500 3.500 0 1 1 8 12C9 11 10 11 11 12M11 4C13 7 16 7 17 10" fill="#1ea868" stroke="#1ea868" stroke-width="2"/></svg></span>
    <span class="tk tk-run"><span class="nx-tb">NX</span></span>
    <span class="tk tk-run tk-active"><span class="nx-tb">NX</span></span>
    <div class="tray">
      <svg class="tr-ic" viewBox="0 0 14 14"><path d="M1 10L7 4L13 10" fill="none" stroke="#fff"/></svg>
      <svg class="tr-ic" viewBox="0 0 18 16"><ellipse cx="7" cy="6" rx="7" ry="6" fill="#2dc100"/><ellipse cx="13" cy="11" rx="5" ry="4.500" fill="#ddd"/></svg>
      <svg class="tr-ic" viewBox="0 0 16 16"><path d="M1 14A13 13 0 0 1 14 1M4 14A10 10 0 0 1 14 4M7 14A7 7 0 0 1 14 7M10 14A4 4 0 0 1 14 10" fill="none" stroke="#eee"/><circle cx="13" cy="13" r="1.800" fill="#fff"/></svg>
      <svg class="tr-ic" viewBox="0 0 16 16"><path d="M5 5V1H11V5M3 5H12V15H3Z" fill="none" stroke="#fff"/><path d="M11 14L13 16L16 12" fill="none" stroke="#ccc"/></svg>
      <svg class="tr-ic" viewBox="0 0 16 16"><path d="M1 5H4L8 2V14L4 11H1Z" fill="none" stroke="#fff"/><path d="M10 5A4 4 0 0 1 10 11M12 3A7 7 0 0 1 12 13" fill="none" stroke="#fff"/></svg>
      <span class="ime">中</span>
      <span class="clock"><span>20:14</span><span>2021/12/15</span></span>
    </div>
  </div>

  <div class="wm">
    <svg class="wm-ic" viewBox="0 0 70 82"><path d="M35 0L70 20V62L35 82L0 62V20Z" fill="#4ab4e8" fill-opacity=".45"/><path d="M35 0C50 8 60 20 70 40V20Z" fill="#fff" fill-opacity=".2"/><path d="M35 22L54 33V55L35 66L16 55V33Z" fill="none" stroke="#fff" stroke-width="4"/><path d="M35 28L48 36V51L35 58L22 51V36Z" fill="#8fd2f6" fill-opacity=".85"/><path d="M22 36L35 44L48 36M35 44V58" fill="none" stroke="#fff" stroke-width="1.500"/><path d="M0 40C10 20 30 14 45 22M35 0C50 14 62 30 54 55M70 45C55 68 30 70 16 55" fill="none" stroke="#fff" stroke-opacity=".7"/></svg>
    <span class="wm-txt">WWW.3DSJW.COM</span>
  </div>
</div>
</body>
</html>
```
FILE: styles.css
```css
* { box-sizing: border-box; }
html, body { margin: 0; height: 100%; overflow: hidden; }
body { font-family: "Noto Sans", "Noto Sans CJK SC", sans-serif; font-size: 12px; color: #333; background: #fff; }
.defs { position: absolute; width: 0; height: 0; }
svg { display: block; flex: none; overflow: visible; }
.app { position: relative; width: 1920px; height: 1080px; display: flex; flex-direction: column; }

.i14 { width: 14px; height: 14px; } .i16 { width: 16px; height: 16px; } .i18 { width: 18px; height: 18px; }
.i20 { width: 20px; height: 20px; } .i24 { width: 24px; height: 24px; } .i26 { width: 28px; height: 28px; }
.i30 { width: 30px; height: 30px; } .i32 { width: 32px; height: 32px; } .i33 { width: 33px; height: 32px; }
.i34 { width: 34px; height: 32px; } .i38 { width: 38px; height: 32px; }

.caret { display: inline-block; flex: none; width: 0; height: 0; border-left: 3.500px solid transparent; border-right: 3.500px solid transparent; border-top: 4px solid #333; }
.caret.white { border-top-color: #fff; }

/* title */
.titlebar { height: 56px; flex: none; background: linear-gradient(90deg, #056b90, #0678a4); color: #fff; display: flex; flex-direction: column; }
.title-row { height: 27px; position: relative; display: flex; justify-content: space-between; }
.qat { display: flex; align-items: center; padding-left: 4px; }
.nx-logo { font: 700 21px/1 "Open Sans", sans-serif; width: 33px; letter-spacing: -.5px; margin-top: 2px; }
.qat-div { width: 1px; height: 20px; background: #04506c; margin: 0 8px 0 4px; }
.qat-ic { width: 18px; height: 16px; }
.qat .caret { margin: 0 7px 0 7px; }
.redo { margin-right: 9px; }
.qat-menu { width: 7px; height: 6px; border-top: 1px solid #fff; position: relative; }
.qat-menu::after { content: ""; position: absolute; left: 0; top: 2px; border-left: 3.500px solid transparent; border-right: 3.500px solid transparent; border-top: 4px solid #fff; }
.app-title { position: absolute; left: 0; right: 28px; top: 5px; text-align: center; font-size: 13px; line-height: 16px; }
.win-ctrl { display: flex; align-items: center; padding-right: 8px; }
.siemens { font: 700 13px/1 "Open Sans", sans-serif; letter-spacing: .55px; margin-right: 27px; margin-top: 1px; }
.w-min { width: 10px; height: 10px; margin-right: 12px; margin-top: 2px; }
.w-res { width: 12px; height: 12px; margin-right: 11px; }
.w-close { width: 12px; height: 12px; margin-top: -2px; }
.tab-row { height: 29px; display: flex; justify-content: space-between; }
.tabs { display: flex; padding-left: 20px; }
.tab { font-size: 13px; line-height: 28px; padding: 0 16px; height: 27px; white-space: nowrap; }
.tab-file { padding: 0; margin-right: 25px; }
.tab-on { color: #ffd27a; border-bottom: 2px solid #ffc246; }
.search { display: flex; align-items: center; padding-right: 7px; margin-top: -1px; }
.search-box { width: 128px; height: 21px; background: #fff; border: 1px solid #bbb; color: #aaa; font-size: 11px; line-height: 18px; display: flex; justify-content: space-between; align-items: center; padding: 0 4px 0 1px; margin-right: 11px; }
.search-ic { width: 16px; height: 16px; }
.top-ic { width: 16px; height: 16px; margin-right: 9.500px; }
.top-ic:last-child { margin-right: 0; }

/* ribbon */
.ribbon { height: 92px; flex: none; display: flex; padding: 5px 0 3px; position: relative; background: #fff; }
.group { display: flex; flex-direction: column; border-right: 1px solid #d4d4d4; flex: none; }
.g-insert { width: 218px; } .g-op { width: 55px; } .g-proc { width: 312px; } .g-show { width: 303px; }
.g-anim { width: 255px; } .g-gc { width: 150px; } .g-ipw { width: 110px; } .g-feat { width: 185px; } .g-last { width: 169px; }
.g-body { flex: 1; display: flex; min-height: 0; }
.g-insert .g-body { padding-left: 6px; }
.pad-op { padding-left: 6px; } .pad-proc { padding-left: 8px; } .pad-show { padding-left: 8px; margin-top: -3px; }
.pad-anim { padding-left: 11px; } .pad-ipw { padding-left: 2px; } .pad-feat { padding-left: 4px; } .pad-last { padding-left: 6px; }
.g-foot { height: 15px; text-align: center; color: #08719a; font-size: 11px; line-height: 20px; padding-right: 18px; position: relative; white-space: nowrap; }
.foot-caret { position: absolute; right: 6px; top: 7px; }
.ribbon-caret { position: absolute; right: 5px; top: 83px; }
.rb { display: flex; flex-direction: column; align-items: center; flex: none; }
.lb { font-size: 11px; line-height: 16px; white-space: nowrap; margin-top: 4px; color: #333; }
.rb .caret { margin-top: 3px; }
.lb-dim { color: #c4c4c4; }
.low { padding-top: 9px; }
.rb-on { background: #cde5ec; border: 1px solid #b0d6e0; height: 74px; padding-top: 2px; }
.pad-show .rb:nth-child(3), .pad-show .rb:last-child { padding-top: 3px; }
.w28 { width: 28px; } .w32 { width: 32px; } .w38 { width: 38px; } .w42 { width: 42px; } .w44 { width: 44px; } .w46 { width: 46px; }
.w48 { width: 48px; } .w51 { width: 51px; } .w52 { width: 52px; } .w54 { width: 54px; }
.w56 { width: 56px; } .w58 { width: 58px; } .w60 { width: 60px; } .w66 { width: 66px; } .w76 { width: 76px; }
.ml7 { margin-left: 7px; }
.smcol { width: 28px; display: flex; flex-direction: column; align-items: center; gap: 14px; }
.col-thick { width: 50px; padding-left: 4px; padding-top: 3px; display: flex; flex-direction: column; }
.thick-btn { width: 31px; height: 32px; background: #cde5ec; border: 1px solid #b0d6e0; display: flex; align-items: center; justify-content: center; }
.tool-row { display: flex; align-items: flex-start; gap: 7px; margin-top: 7px; padding-left: 8px; }
.tool-row .caret { margin-top: 10px; }
.i-tool { width: 14px; height: 26px; }
.col-arrows { width: 36px; padding-top: 3px; display: flex; flex-direction: column; align-items: center; gap: 8px; margin-left: 9px; }
.i-arrow { width: 18px; height: 16px; } .i-lay { width: 16px; height: 16px; }
.media { width: 96px; display: grid; grid-template-columns: 48px 48px; grid-auto-rows: 35px; margin-top: -2px; height: 70px; }
.mbtn { display: flex; align-items: center; gap: 7px; position: relative; }
.speed { width: 96px; margin-left: 9px; display: flex; flex-direction: column; align-items: center; padding-top: 14px; }
.track { display: block; width: 96px; height: 4px; background: #aaa; position: relative; }
.thumb { position: absolute; left: 39px; top: -6px; width: 8px; height: 16px; background: #0a6488; }
.speed .lb { margin-top: 10px; }
.gc-body { flex-direction: column; padding: 6px 0 0 5px; gap: 10px; }
.gc-row { display: flex; gap: 3px; align-items: center; height: 20px; }
.v-sep { width: 1px; height: 18px; background: #ccc; margin: 0 2px; }
.sq { width: 32px; height: 32px; border: 1px solid #888; background: #fff; }

/* toolbar */
.toolbar { height: 29px; flex: none; display: flex; align-items: center; padding-top: 3px; border-top: 1px solid #ddd; border-bottom: 2px solid #aaa; background: #fff; position: relative; }
.tg { display: flex; align-items: center; justify-content: space-between; height: 22px; flex: none; }
.tb { width: 24px; height: 23px; display: flex; align-items: center; justify-content: center; flex: none; position: relative; }
.tb-on { background: #cde5ec; border: 1px solid #b0d6e0; }
.cb { width: 14px; display: flex; align-items: center; justify-content: center; flex: none; }
.tg-menu { width: 89px; padding-left: 13px; justify-content: flex-start; border-right: 1px solid #ccc; }
.burger { width: 10px; height: 9px; border-top: 1px solid #333; border-bottom: 1px solid #333; position: relative; margin-right: 7px; }
.burger::after { content: ""; position: absolute; left: 0; right: 0; top: 3px; height: 1px; background: #333; }
.menu-txt { font-size: 12px; width: 46px; white-space: nowrap; }
.tg-nav { width: 98px; margin-left: 9px; position: relative; }
.tg-nav::after { content: ""; position: absolute; right: -7px; top: 0; height: 22px; width: 1px; background: #ccc; }
.tg-sel { width: 138px; margin-left: 16px; }
.combo { flex: none; height: 21px; border: 1px solid #777; font-size: 12px; line-height: 19px; padding-left: 2px; position: relative; white-space: nowrap; }
.combo::after { content: ""; position: absolute; right: 3px; top: 7px; border-left: 4px solid transparent; border-right: 4px solid transparent; border-top: 5px solid #222; }
.c-path { width: 147px; margin-left: 7px; }
.m-funnel { margin-left: 4px; }
.c-asm { width: 155px; margin-left: 7px; }
.tg-asm { width: 90px; margin-left: 4px; }
.c-all { width: 71px; margin-left: 4px; }
.c-empty { width: 98px; margin-left: 11px; }
.tg-geo { width: 200px; margin-left: 4px; }
.c-in { width: 126px; margin-left: 5px; }
.tg-cut { width: 48px; margin-left: 8px; }
.tg-view { width: 283px; margin-left: 16px; position: relative; }
.tg-view::before { content: ""; position: absolute; left: -8px; top: 0; height: 22px; width: 1px; background: #ccc; }
.tg-view::after { content: ""; position: absolute; right: -7px; top: 0; height: 22px; width: 1px; background: #ccc; }
.tg-mcs { width: 72px; margin-left: 17px; }
.tg-rule { margin-left: 8px; width: 39px; justify-content: flex-start; border-left: 1px solid #ccc; border-right: 1px solid #ccc; padding-left: 8px; }
.tail-caret { margin-left: auto; margin-right: 5px; }
.mcs-txt { position: absolute; top: 0; left: 5px; font-size: 7px; line-height: 8px; color: #222; font-weight: 700; letter-spacing: .3px; }

/* workspace */
.workspace { flex: 1; display: flex; min-height: 0; border-bottom: 1px solid #aaa; border-right: 1px solid #aaa; }
.sidebar { width: 32px; flex: none; background: #dcdcdc; border-right: 1px solid #a8a8a8; display: flex; flex-direction: column; align-items: center; position: relative; }
.gear { height: 28px; display: flex; align-items: center; justify-content: center; margin-bottom: 14px; }
.nav-list { display: flex; flex-direction: column; align-self: stretch; }
.nav { height: 42.500px; display: flex; align-items: center; justify-content: center; padding-left: 2px; }
.nav-on { background: #fff; margin: -2px -1px -2px 2px; height: 46.500px; border: 1px solid #bbb; border-right: 0; border-radius: 2px 0 0 2px; z-index: 1; padding-left: 0; }
.nav2 { height: 40px; display: flex; align-items: center; justify-content: center; padding-left: 2px; }
.m9 { margin-top: 10px; } .m13 { margin-top: 13px; } .m5 { margin-top: 5px; }
.side-scroll { position: absolute; left: 2px; top: 321px; width: 8px; height: 59px; border-radius: 4px; background: repeating-linear-gradient(#5bb060 0 2px, #3d8a44 2px 3px) 0 36px / 100% 21px no-repeat, #555; box-shadow: 0 0 0 1px #888; }

.panel { flex: 1; min-width: 0; display: flex; flex-direction: column; padding: 0 9px 6px 6px; position: relative; }
.panel-head { height: 29px; display: flex; align-items: center; justify-content: space-between; padding-left: 4px; font-size: 12px; flex: none; position: relative; }
.restore { width: 12px; height: 12px; margin-right: 1px; }
.grid { flex: 1; min-height: 0; display: flex; flex-direction: column; border-top: 1px solid #ddd; border-left: 1px solid #ddd; overflow: hidden; }
.g-head { height: 22px; flex: none; display: flex; background: #efefef; border-bottom: 2px solid #ddd; }
.hc { border-right: 1px solid #d8d8d8; line-height: 23px; padding-left: 5px; color: #333; font-size: 12px; white-space: nowrap; }
.c-name { width: 201px; flex: none; }
.hc.c-name { padding-left: 7px; }
.c-path-c { width: 50px; flex: none; }
.c-std { width: 100px; flex: none; }
.c-rest { flex: 1; border-right: 0; }
.g-row { height: 20px; flex: none; display: flex; background: #fff; border-bottom: 1px solid #e8e8e8; }
.g-row.alt { background: #f9f9f9; }
.gc { border-right: 1px solid #ebebeb; line-height: 20px; padding-left: 4px; white-space: nowrap; position: relative; }
.gc.c-name { border-right-color: #000; padding-left: 0; }
.gc.c-rest { border-right: 0; }
.gc.sel { background: #8cc2d2; border-right-color: #f0f8fa; }
.node { display: flex; align-items: center; height: 19px; padding-top: 1px; }
.n0 { padding-left: 4px; font-size: 12.400px; }
.n1 { padding-left: 20px; gap: 4px; }
.n2 { padding-left: 6px; padding-top: 0; }
.n3 { padding-left: 39px; gap: 3px; font-size: 12.400px; }
.exp { width: 10px; height: 10px; border: 1px solid #bbb; background: #fff; position: relative; margin-right: 6px; }
.exp::after { content: ""; position: absolute; left: 1px; right: 1px; top: 3px; height: 1px; background: #333; }
.sel-name { background: #8cc2d2; align-self: stretch; flex: 1; padding-left: 3px; line-height: 21px; font-size: 12.400px; }
.dots { position: absolute; border-top: 1px dotted #888; }
.d1 { left: 11px; width: 9px; top: 9px; }
.d2 { left: 29px; top: 9px; width: 10px; }
.vdots { position: absolute; left: 11px; top: -10px; height: 15px; border-left: 1px dotted #888; }
.g-fill { flex: 1; min-height: 0; background: repeating-linear-gradient(#fff 0 19px, #e9e9e9 19px 20px, #f9f9f9 20px 39px, #e9e9e9 39px 40px); }
.g-fill-cols { width: 1051px; height: 100%; background:
  linear-gradient(#000, #000) 200px 0 / 1px 100% no-repeat,
  repeating-linear-gradient(90deg, #ebebeb 0 1px, transparent 1px 100px) 250px 0 / 801px 100% no-repeat; }
.hscroll { height: 6px; flex: none; background: #ddd; border: 1px solid #b0b0b0; border-top-width: 2px; border-bottom-width: 2px; }
.sect { height: 24px; flex: none; border-bottom: 2px solid #ccc; color: #08719a; font-size: 14px; line-height: 24px; padding-left: 24px; position: relative; }
.tri { position: absolute; left: 10px; top: 8px; border-top: 4px solid transparent; border-bottom: 4px solid transparent; border-left: 5px solid #08719a; }

/* context menu */
.ctx { position: absolute; left: 112px; top: 100px; width: 96px; background: #fff; border: 1px solid #aaa; box-shadow: 3px 3px 2px #999; padding: 0 0 1px; z-index: 3; }
.mi { height: 24px; display: flex; align-items: center; padding-left: 6px; font-size: 11px; color: #333; position: relative; gap: 5px; }
.mi.sub { padding-left: 27px; }
.sub::after { content: ""; position: absolute; right: 7px; top: 8px; border-top: 4px solid transparent; border-bottom: 4px solid transparent; border-left: 4px solid #222; }
.msep { height: 9px; margin: 0 12px; position: relative; }
.msep::after { content: ""; position: absolute; left: 0; right: 0; top: 4px; height: 1px; background: #ddd; }
.ink { position: absolute; left: 98px; top: 185px; width: 110px; height: 54px; z-index: 4; }

/* status */
.status { height: 21px; flex: none; text-align: center; line-height: 19px; font-size: 11px; font-weight: 700; padding-right: 20px; color: #222; }

/* taskbar */
.taskbar { height: 40px; flex: none; display: flex; color: #fff; background: linear-gradient(90deg, #4a4238 0, #4e403c 443px, #4a3f40 470px, #2a2a30 550px, #2a2a30 590px, #4a4636 640px, #4a4636 1180px, #4e3f3c 1240px, #50383a 1430px, #2a2830 1490px, #2a2a30 1530px, #4a4040 1600px, #4a3f3f 1920px); }
.tk { width: 49px; height: 40px; display: flex; align-items: center; justify-content: center; flex: none; position: relative; }
.tk-start { width: 50px; }
.tk-run::after { content: ""; position: absolute; left: 5px; right: 5px; bottom: 0; height: 2px; background: #6cb0e8; }
.tk-active { background: #6b625c; }
.tk-active::after { left: 0; right: 0; }
.calc { width: 18px; height: 28px; }
.youdao { width: 24px; height: 29px; border-radius: 5px; background: #f0002a; color: #fff; font-size: 10px; font-weight: 700; display: flex; align-items: center; justify-content: center; white-space: nowrap; }
.nx-tb { width: 21px; height: 26px; background: #8a1208; color: #fff; font: 700 10px/26px "DejaVu Sans Mono", monospace; text-align: center; box-shadow: -3px 3px 0 #0a8a8a; }
.tray { margin-left: auto; display: flex; align-items: center; padding-right: 1px; }
.tr-ic { width: 16px; height: 16px; margin-right: 7.500px; }
.ime { font-size: 13px; width: 18px; margin-right: 7px; }
.clock { display: flex; flex-direction: column; align-items: center; width: 72px; font-size: 12px; line-height: 19px; }

/* watermark */
.wm { position: absolute; left: 1638px; top: 985px; width: 250px; height: 82px; z-index: 6; pointer-events: none; }
.wm-ic { width: 70px; height: 82px; }
.wm-txt { position: absolute; left: 80px; top: 56px; font: 700 13px/14px "Liberation Sans", sans-serif; letter-spacing: 3.400px; color: rgba(255, 255, 255, .4); white-space: nowrap; }
```
